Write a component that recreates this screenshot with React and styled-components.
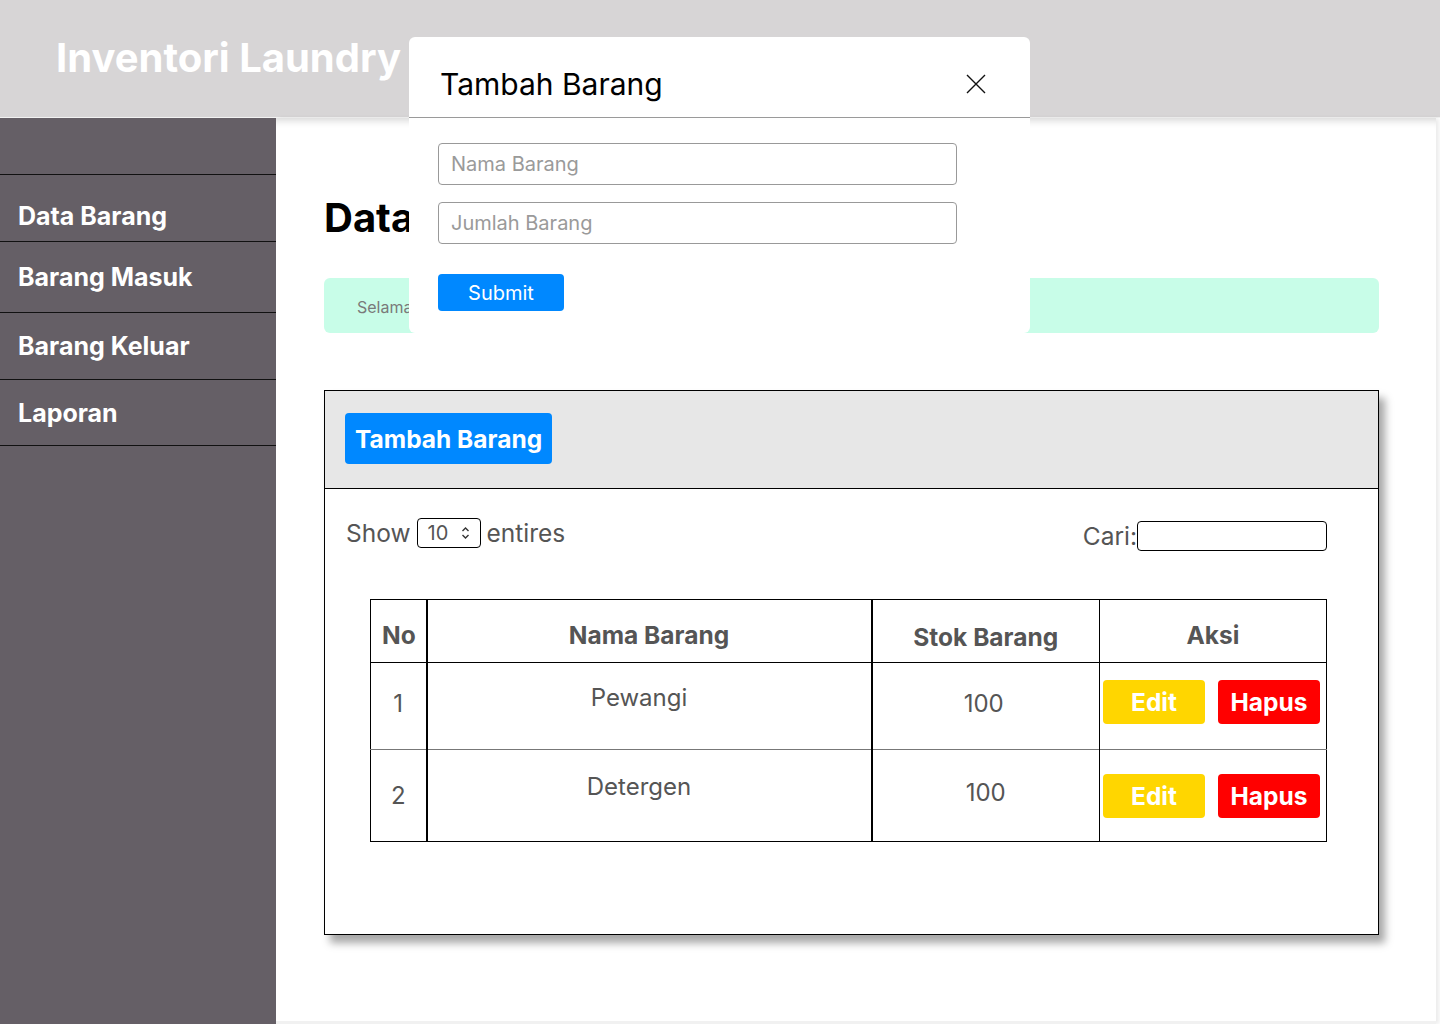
import React from 'react';
import styled, { createGlobalStyle } from 'styled-components';

const GlobalStyle = createGlobalStyle`
  * { box-sizing: border-box; }
  body {
    margin: 0;
    font-family: Inter, "Noto Sans", "Liberation Sans", sans-serif;
    background: #fff;
  }
`;

const Page = styled.div`
  position: relative;
  width: 1440px;
  height: 1024px;
  overflow: hidden;
  display: flex;
  flex-direction: column;
`;

const Header = styled.header`
  height: 118px;
  flex-shrink: 0;
  background: #d7d5d6;
  border-bottom: 1px solid #f2f2f2;
  display: flex;
  align-items: center;
  padding: 0 0 0 56px;
`;

const Brand = styled.h1`
  margin: 0 0 2px;
  color: #fff;
  font-size: 40px;
  font-weight: 700;
`;

const Body = styled.div`
  flex: 1;
  display: flex;
`;

const Sidebar = styled.nav`
  width: 276px;
  flex-shrink: 0;
  background: #655f66;
  padding-top: 56px;
`;

const NavItem = styled.div`
  height: ${(p) => p.h}px;
  border-top: 1px solid #111;
  border-bottom: ${(p) => (p.last ? '1px solid #111' : 'none')};
  display: flex;
  align-items: center;
  padding: ${(p) => p.pt || 0}px 0 0 18px;
  color: #fff;
  font-size: 25px;
  font-weight: 700;
`;

const Main = styled.main`
  flex: 1;
  margin-right: 4px;
  padding: 76px 57px 0 48px;
  box-shadow: inset 0 10px 8px -8px rgba(0, 0, 0, 0.18), 3px 0 4px rgba(0, 0, 0, 0.08);
  border-bottom: 3px solid #f1f1f1;
`;

const Title = styled.h2`
  margin: 0;
  font-size: 40px;
  line-height: 48px;
  font-weight: 700;
  color: #000;
`;

const Alert = styled.div`
  margin-top: 36px;
  height: 55px;
  background: #c8fde8;
  border-radius: 6px;
  display: flex;
  align-items: center;
  padding: 2px 0 0 33px;
  color: #7a7a7a;
  font-size: 16px;
`;

const Card = styled.section`
  margin-top: 57px;
  height: 545px;
  border: 1px solid #000;
  background: #fff;
  box-shadow: 6px 8px 8px rgba(0, 0, 0, 0.35);
`;

const CardHead = styled.div`
  height: 98px;
  background: #e7e7e7;
  border-bottom: 1px solid #000;
  padding: 22px 20px;
`;

const BigButton = styled.button`
  height: 51px;
  padding: 0 10px;
  border: none;
  border-radius: 4px;
  background: #0088ff;
  color: #fff;
  font-family: inherit;
  font-size: 24.5px;
  font-weight: 700;
`;

const Controls = styled.div`
  display: flex;
  justify-content: space-between;
  align-items: flex-start;
  padding: 29px 51px 0 21px;
  color: #555;
  font-size: 24.5px;
`;

const ShowGroup = styled.div`
  display: flex;
  align-items: center;
  gap: 6px;
`;

const SelectBox = styled.div`
  width: 64px;
  height: 30px;
  border: 1px solid #000;
  border-radius: 4px;
  display: flex;
  align-items: center;
  justify-content: space-between;
  padding: 0 10px 0 10px;
  font-size: 20px;
  color: #555;
`;

const SearchGroup = styled.div`
  display: flex;
  align-items: center;
  margin-top: 3px;
`;

const SearchInput = styled.div`
  width: 190px;
  height: 30px;
  border: 1px solid #000;
  border-radius: 4px;
`;

const Table = styled.table`
  margin: 48px 0 0 45px;
  width: 956px;
  border-collapse: collapse;
  border: 1px solid #000;
  color: #555;
  font-size: 24px;
  table-layout: fixed;
`;

const Th = styled.th`
  height: 63px;
  padding: ${(p) => (p.low ? '12px' : '7px')} 0 0 ${(p) => (p.left ? '11px' : '0')};
  text-align: ${(p) => (p.left ? 'left' : 'center')};
  font-size: 24.5px;
  font-weight: 700;
  border-bottom: 1px solid #000;
  border-right: ${(p) => p.br || 0}px solid #000;
  vertical-align: middle;
`;

const Tr = styled.tr`
  height: ${(p) => p.h}px;
  border-bottom: ${(p) => (p.sep ? '1px solid #777' : 'none')};
`;

const Td = styled.td`
  padding: ${(p) => p.pad || '0'};
  text-align: center;
  vertical-align: ${(p) => (p.top ? 'top' : 'middle')};
  border-right: ${(p) => p.br || 0}px solid #000;
`;

const Actions = styled.div`
  display: flex;
  gap: 13px;
  padding-left: 3px;
`;

const ActionButton = styled.button`
  width: 102px;
  height: 44px;
  border: none;
  border-radius: 4px;
  background: ${(p) => p.bg};
  color: #fff;
  font-family: inherit;
  font-size: 24.5px;
  font-weight: 700;
`;

const Modal = styled.div`
  position: absolute;
  left: 409px;
  top: 37px;
  width: 621px;
  height: 296px;
  background: #fff;
  border-radius: 6px;
`;

const ModalHead = styled.div`
  height: 81px;
  border-bottom: 1px solid #9a9a9a;
  display: flex;
  align-items: center;
  justify-content: space-between;
  padding: 14px 44px 0 31px;
`;

const ModalTitle = styled.h3`
  margin: 0;
  font-size: 30px;
  font-weight: 400;
  color: #000;
`;

const CloseBtn = styled.button`
  width: 20px;
  height: 20px;
  padding: 0;
  border: none;
  background: none;
  display: flex;
`;

const ModalBody = styled.div`
  padding: 25px 29px 0;
  display: flex;
  flex-direction: column;
  align-items: flex-start;
`;

const Field = styled.input`
  width: 519px;
  height: 42px;
  margin-bottom: 17px;
  border: 1px solid #999;
  border-radius: 4px;
  padding: 0 12px;
  font-family: inherit;
  font-size: 20px;
  &::placeholder { color: #9a9a9a; }
`;

const SubmitButton = styled.button`
  margin-top: 13px;
  width: 126px;
  height: 37px;
  border: none;
  border-radius: 4px;
  background: #0088ff;
  color: #fff;
  font-family: inherit;
  font-size: 20px;
`;

const UpDown = () => (
  <svg width="9" height="14" viewBox="0 0 9 14" fill="none" stroke="#333" strokeWidth="1.4">
    <path d="M1.5 5 4.5 2 7.5 5" />
    <path d="M1.5 9 4.5 12 7.5 9" />
  </svg>
);

const rows = [
  { no: 1, nama: 'Pewangi', stok: 100, h: 87 },
  { no: 2, nama: 'Detergen', stok: 100, h: 92 },
];

const App = () => {
  return (
    <>
      <GlobalStyle />
      <Page>
        <Header>
          <Brand>Inventori Laundry</Brand>
        </Header>
        <Body>
          <Sidebar>
            <NavItem h={67} pt={16}>Data Barang</NavItem>
            <NavItem h={71}>Barang Masuk</NavItem>
            <NavItem h={67}>Barang Keluar</NavItem>
            <NavItem h={67} last>Laporan</NavItem>
          </Sidebar>
          <Main>
            <Title>Data Barang</Title>
            <Alert>Selamat datang, Admin</Alert>
            <Card>
              <CardHead>
                <BigButton>Tambah Barang</BigButton>
              </CardHead>
              <Controls>
                <ShowGroup>
                  Show
                  <SelectBox>
                    10
                    <UpDown />
                  </SelectBox>
                  entires
                </ShowGroup>
                <SearchGroup>
                  Cari:
                  <SearchInput />
                </SearchGroup>
              </Controls>
              <Table>
                <colgroup>
                  <col style={{ width: 56 }} />
                  <col style={{ width: 445 }} />
                  <col style={{ width: 228 }} />
                  <col style={{ width: 227 }} />
                </colgroup>
                <thead>
                  <tr>
                    <Th left br={2}>No</Th>
                    <Th br={2}>Nama Barang</Th>
                    <Th br={1} low>Stok Barang</Th>
                    <Th>Aksi</Th>
                  </tr>
                </thead>
                <tbody>
                  {rows.map((r, i) => (
                    <Tr key={r.no} h={r.h} sep={i === 0}>
                      <Td br={2} pad={i === 0 ? '0 0 6px 0' : '0'}>{r.no}</Td>
                      <Td br={2} top pad={i === 0 ? '20px 20px 0 0' : '22px 20px 0 0'}>{r.nama}</Td>
                      <Td br={1} pad={i === 0 ? '0 4px 6px 0' : '0 0 6px 0'}>{r.stok}</Td>
                      <Td pad={i === 0 ? '0 0 8px 0' : '0'}>
                        <Actions>
                          <ActionButton bg="#ffd600">Edit</ActionButton>
                          <ActionButton bg="#ff0000">Hapus</ActionButton>
                        </Actions>
                      </Td>
                    </Tr>
                  ))}
                </tbody>
              </Table>
            </Card>
          </Main>
        </Body>
        <Modal>
          <ModalHead>
            <ModalTitle>Tambah Barang</ModalTitle>
            <CloseBtn aria-label="close">
              <svg width="20" height="20" viewBox="0 0 20 20" stroke="#111" strokeWidth="1.4">
                <path d="M1 1 19 19M19 1 1 19" />
              </svg>
            </CloseBtn>
          </ModalHead>
          <ModalBody>
            <Field placeholder="Nama Barang" />
            <Field placeholder="Jumlah Barang" />
            <SubmitButton>Submit</SubmitButton>
          </ModalBody>
        </Modal>
      </Page>
    </>
  );
};

export default App;
